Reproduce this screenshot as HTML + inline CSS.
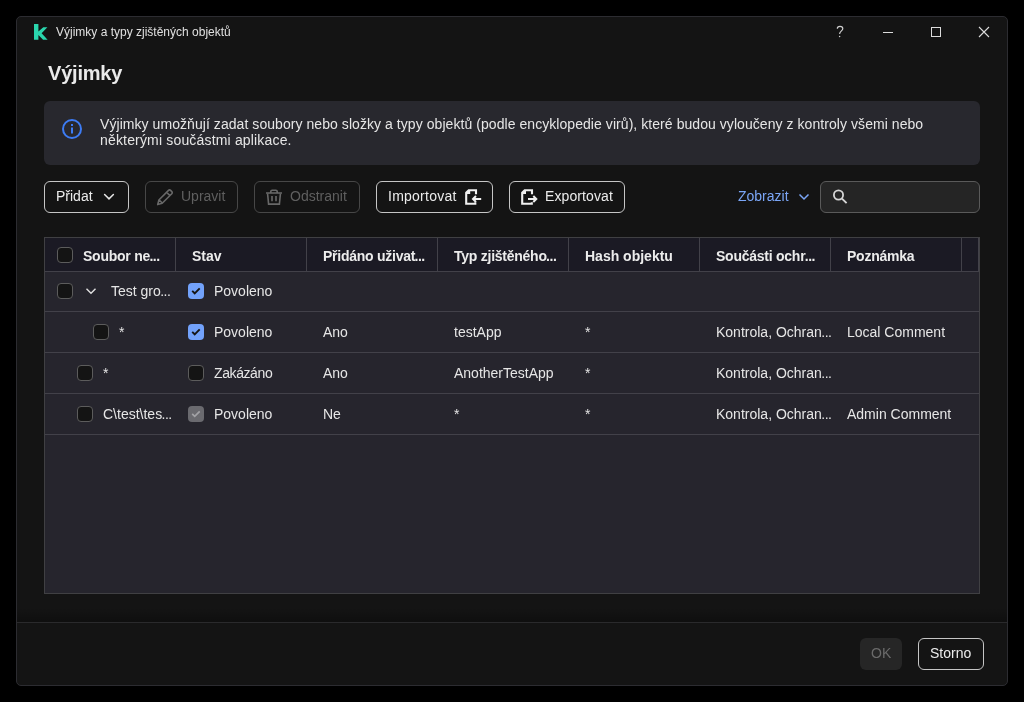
<!DOCTYPE html>
<html><head><meta charset="utf-8">
<style>
*{box-sizing:border-box;margin:0;padding:0}
html,body{width:1024px;height:702px;background:#000;overflow:hidden;font-family:"Liberation Sans",sans-serif;color:#e6e6e6}
.abs{position:absolute}
#win{position:absolute;left:16px;top:16px;width:992px;height:670px;background:#141414;border:1px solid #2c2c31;border-radius:5px}
.t{position:absolute;white-space:nowrap;font-size:14px;line-height:16px;will-change:transform}
.btn{position:absolute;top:181px;height:32px;border:1.5px solid #c6c6c6;border-radius:6px}
.btn.dis{border-color:#474747}
.cb{position:absolute;width:16px;height:16px;border:1.5px solid #5c5c5c;background:#141414;border-radius:4px}
.cbon{position:absolute;width:16px;height:16px;background:#72a2fb;border-radius:4px}
.cbdis{position:absolute;width:16px;height:16px;background:#6a6a6f;border-radius:4px}
.hl{position:absolute;left:45px;width:934px;height:1px;background:#424149}
.vl{position:absolute;top:238px;width:1px;height:33px;background:#424149}
.th{font-weight:bold;color:#ececec}
.d{letter-spacing:-0.5px;margin-left:-0.6px}
</style></head><body>
<div id="win"></div>

<!-- title bar -->
<svg class="abs" style="left:30px;top:20px" width="24" height="24" viewBox="0 0 24 24">
  <path d="M4 3.9h4.4v15.9H4z M8.4 11.4L13.3 7.2H17.4L11.6 13.2L17.6 19.8H13.1L8.4 14.9z" fill="#2ad5ad"/>
</svg>
<div class="t" style="left:56px;top:24px;font-size:12px;color:#e0e0e0">Výjimky a typy zjištěných objektů</div>
<svg class="abs" style="left:832px;top:22px" width="16" height="20" viewBox="0 0 16 20"><path d="M5.3 6.7C5.3 5.1 6.5 4.4 8 4.4C9.6 4.4 10.8 5.3 10.8 6.7C10.8 8.7 7.6 9.3 7.6 12.1" fill="none" stroke="#d0d0d0" stroke-width="1.15"/><circle cx="7.6" cy="14.6" r="0.75" fill="#d0d0d0"/></svg>
<div class="abs" style="left:883px;top:32px;width:10px;height:1px;background:#dcdcdc"></div>
<div class="abs" style="left:931px;top:27px;width:10px;height:10px;border:1px solid #dcdcdc"></div>
<svg class="abs" style="left:978px;top:26px" width="12" height="12" viewBox="0 0 12 12"><path d="M1 1L11 11M11 1L1 11" stroke="#dcdcdc" stroke-width="1.1"/></svg>

<!-- heading -->
<div class="t" style="left:48px;top:62px;font-size:20px;line-height:22px;font-weight:bold;color:#eaeaea;letter-spacing:-0.2px">Výjimky</div>

<!-- info box -->
<div class="abs" style="left:44px;top:101px;width:936px;height:64px;background:#28282e;border-radius:6px"></div>
<svg class="abs" style="left:62px;top:119px" width="20" height="20" viewBox="0 0 20 20">
  <circle cx="10" cy="10" r="9" fill="none" stroke="#3d7cf4" stroke-width="2"/>
  <rect x="9" y="8.5" width="2" height="6" fill="#3d7cf4"/><rect x="9" y="5" width="2" height="2" fill="#3d7cf4"/>
</svg>
<div class="t" style="left:100px;top:116px;color:#e6e6e6;letter-spacing:0.06px">Výjimky umožňují zadat soubory nebo složky a typy objektů (podle encyklopedie virů), které budou vyloučeny z kontroly všemi nebo</div>
<div class="t" style="left:100px;top:132px;color:#e6e6e6;letter-spacing:0.17px">některými součástmi aplikace.</div>

<!-- toolbar -->
<div class="btn" style="left:44px;width:85px"></div>
<div class="t" style="left:56px;top:188px;color:#ececec">Přidat</div>
<svg class="abs" style="left:102px;top:190px" width="14" height="14" viewBox="0 0 14 14"><path d="M2.6 4.5l4.4 4.4 4.4-4.4" fill="none" stroke="#e6e6e6" stroke-width="1.5" stroke-linecap="round"/></svg>

<div class="btn dis" style="left:145px;width:93px"></div>
<svg class="abs" style="left:152px;top:184px" width="28" height="26" viewBox="0 0 28 26">
  <path d="M5.7 20.6l1.2-4.6 9.6-9.6c.6-.6 1.5-.6 2.1 0l1.2 1.2c.6.6.6 1.5 0 2.1l-9.6 9.6z M14.6 8.3l3.3 3.3 M7.2 16l3.3 3.3" fill="none" stroke="#686868" stroke-width="1.6" stroke-linejoin="round"/>
</svg>
<div class="t" style="left:181px;top:188px;color:#5f5f5f">Upravit</div>

<div class="btn dis" style="left:254px;width:106px"></div>
<svg class="abs" style="left:260px;top:184px" width="28" height="26" viewBox="0 0 28 26">
  <path d="M6 9h16 M10.8 9V7.6a1.4 1.4 0 0 1 1.4-1.4h3.6a1.4 1.4 0 0 1 1.4 1.4V9 M7.6 9.8l1 10.3h10.8l1-10.3 M12 12v5.2 M16 12v5.2" fill="none" stroke="#686868" stroke-width="1.6"/>
</svg>
<div class="t" style="left:290px;top:188px;color:#5f5f5f">Odstranit</div>

<div class="btn" style="left:376px;width:117px"></div>
<div class="t" style="left:388px;top:188px;color:#ececec;letter-spacing:0.25px">Importovat</div>
<svg class="abs" style="left:460px;top:182px" width="28" height="28" viewBox="0 0 28 28">
  <path d="M16 12.2V8.2H8.7L6.2 10.7V21.8H15.3V20.2" fill="none" stroke="#f0f0f0" stroke-width="2.1"/><rect x="7" y="9" width="3.2" height="3" fill="#f0f0f0"/>
  <path d="M21.2 17H13.2 M16 14L13 17L16 20" fill="none" stroke="#f0f0f0" stroke-width="2"/>
</svg>

<div class="btn" style="left:509px;width:116px"></div>
<svg class="abs" style="left:514px;top:182px" width="28" height="28" viewBox="0 0 28 28">
  <path d="M18 12.2V8.2H10.7L8.2 10.7V21.8H17.8V20.2" fill="none" stroke="#f0f0f0" stroke-width="2.1"/><rect x="9" y="9" width="3" height="3" fill="#f0f0f0"/>
  <path d="M14 17H22 M19.3 14L22.3 17L19.3 20" fill="none" stroke="#f0f0f0" stroke-width="2"/>
</svg>
<div class="t" style="left:545px;top:188px;color:#ececec;letter-spacing:0.1px">Exportovat</div>

<div class="t" style="left:738px;top:188px;color:#7ba6f7">Zobrazit</div>
<svg class="abs" style="left:797px;top:190px" width="14" height="14" viewBox="0 0 14 14"><path d="M2.5 4.5l4.5 4.5 4.5-4.5" fill="none" stroke="#7ba6f7" stroke-width="1.5"/></svg>

<div class="abs" style="left:820px;top:181px;width:160px;height:32px;background:#252525;border:1px solid #5a5a5a;border-radius:6px"></div>
<svg class="abs" style="left:828px;top:185px" width="24" height="24" viewBox="0 0 24 24">
  <circle cx="10.5" cy="10" r="4.6" fill="none" stroke="#d6d6d6" stroke-width="1.8"/>
  <path d="M14 13.6l4.6 4.6" stroke="#d6d6d6" stroke-width="1.9"/>
</svg>

<!-- table -->
<div class="abs" style="left:44px;top:237px;width:936px;height:357px;background:#26252d;border:1px solid #404043"></div>
<div class="abs" style="left:45px;top:238px;width:934px;height:33px;background:#1b1a24"></div>
<div class="hl" style="top:271px"></div>
<div class="hl" style="top:311px"></div>
<div class="hl" style="top:352px"></div>
<div class="hl" style="top:393px"></div>
<div class="hl" style="top:434px"></div>
<div class="vl" style="left:175px"></div>
<div class="vl" style="left:306px"></div>
<div class="vl" style="left:437px"></div>
<div class="vl" style="left:568px"></div>
<div class="vl" style="left:699px"></div>
<div class="vl" style="left:830px"></div>
<div class="vl" style="left:961px"></div>
<div class="vl" style="left:978px"></div>

<!-- header -->
<div class="cb" style="left:57px;top:247px"></div>
<div class="t th" style="left:83px;top:248px;letter-spacing:-0.25px">Soubor ne<span class="d">...</span></div>
<div class="t th" style="left:192px;top:248px">Stav</div>
<div class="t th" style="left:323px;top:248px;letter-spacing:-0.25px">Přidáno uživat<span class="d">...</span></div>
<div class="t th" style="left:454px;top:248px;letter-spacing:-0.25px">Typ zjištěného<span class="d">...</span></div>
<div class="t th" style="left:585px;top:248px">Hash objektu</div>
<div class="t th" style="left:716px;top:248px;letter-spacing:-0.25px">Součásti ochr<span class="d">...</span></div>
<div class="t th" style="left:847px;top:248px;letter-spacing:-0.25px">Poznámka</div>

<!-- row 1 -->
<div class="cb" style="left:57px;top:283px"></div>
<svg class="abs" style="left:84px;top:284px" width="14" height="14" viewBox="0 0 14 14"><path d="M2.5 4.8l4.5 4.5 4.5-4.5" fill="none" stroke="#e0e0e0" stroke-width="1.4"/></svg>
<div class="t" style="left:111px;top:283px">Test gro<span class="d">...</span></div>
<div class="cbon" style="left:188px;top:283px"></div>
<svg class="abs" style="left:188px;top:283px" width="16" height="16" viewBox="0 0 16 16"><path d="M4.2 7.9L6.7 10.3L11.7 5.3" fill="none" stroke="#151515" stroke-width="1.9"/></svg>
<div class="t" style="left:214px;top:283px">Povoleno</div>

<!-- row 2 -->
<div class="cb" style="left:93px;top:324px"></div>
<div class="t" style="left:119px;top:324px">*</div>
<div class="cbon" style="left:188px;top:324px"></div>
<svg class="abs" style="left:188px;top:324px" width="16" height="16" viewBox="0 0 16 16"><path d="M4.2 7.9L6.7 10.3L11.7 5.3" fill="none" stroke="#151515" stroke-width="1.9"/></svg>
<div class="t" style="left:214px;top:324px">Povoleno</div>
<div class="t" style="left:323px;top:324px">Ano</div>
<div class="t" style="left:454px;top:324px">testApp</div>
<div class="t" style="left:585px;top:324px">*</div>
<div class="t" style="left:716px;top:324px">Kontrola, Ochran<span class="d">...</span></div>
<div class="t" style="left:847px;top:324px">Local Comment</div>

<!-- row 3 -->
<div class="cb" style="left:77px;top:365px"></div>
<div class="t" style="left:103px;top:365px">*</div>
<div class="cb" style="left:188px;top:365px"></div>
<div class="t" style="left:214px;top:365px;letter-spacing:-0.4px">Zakázáno</div>
<div class="t" style="left:323px;top:365px">Ano</div>
<div class="t" style="left:454px;top:365px">AnotherTestApp</div>
<div class="t" style="left:585px;top:365px">*</div>
<div class="t" style="left:716px;top:365px">Kontrola, Ochran<span class="d">...</span></div>

<!-- row 4 -->
<div class="cb" style="left:77px;top:406px"></div>
<div class="t" style="left:103px;top:406px">C\test\tes<span class="d">...</span></div>
<div class="cbdis" style="left:188px;top:406px"></div>
<svg class="abs" style="left:188px;top:406px" width="16" height="16" viewBox="0 0 16 16"><path d="M4.2 7.9L6.7 10.3L11.7 5.3" fill="none" stroke="#a2a2a6" stroke-width="1.7"/></svg>
<div class="t" style="left:214px;top:406px">Povoleno</div>
<div class="t" style="left:323px;top:406px">Ne</div>
<div class="t" style="left:454px;top:406px">*</div>
<div class="t" style="left:585px;top:406px">*</div>
<div class="t" style="left:716px;top:406px">Kontrola, Ochran<span class="d">...</span></div>
<div class="t" style="left:847px;top:406px">Admin Comment</div>

<!-- footer -->
<div class="abs" style="left:17px;top:608px;width:990px;height:14px;background:linear-gradient(rgba(0,0,0,0),rgba(0,0,0,0.28))"></div>
<div class="abs" style="left:17px;top:622px;width:990px;height:1px;background:#2a2a2c"></div>
<div class="abs" style="left:860px;top:638px;width:42px;height:32px;background:#262626;border-radius:6px"></div>
<div class="t" style="left:871px;top:645px;color:#6a6a6a">OK</div>
<div class="btn" style="left:918px;top:638px;width:66px"></div>
<div class="t" style="left:930px;top:645px;color:#ececec">Storno</div>
</body></html>
